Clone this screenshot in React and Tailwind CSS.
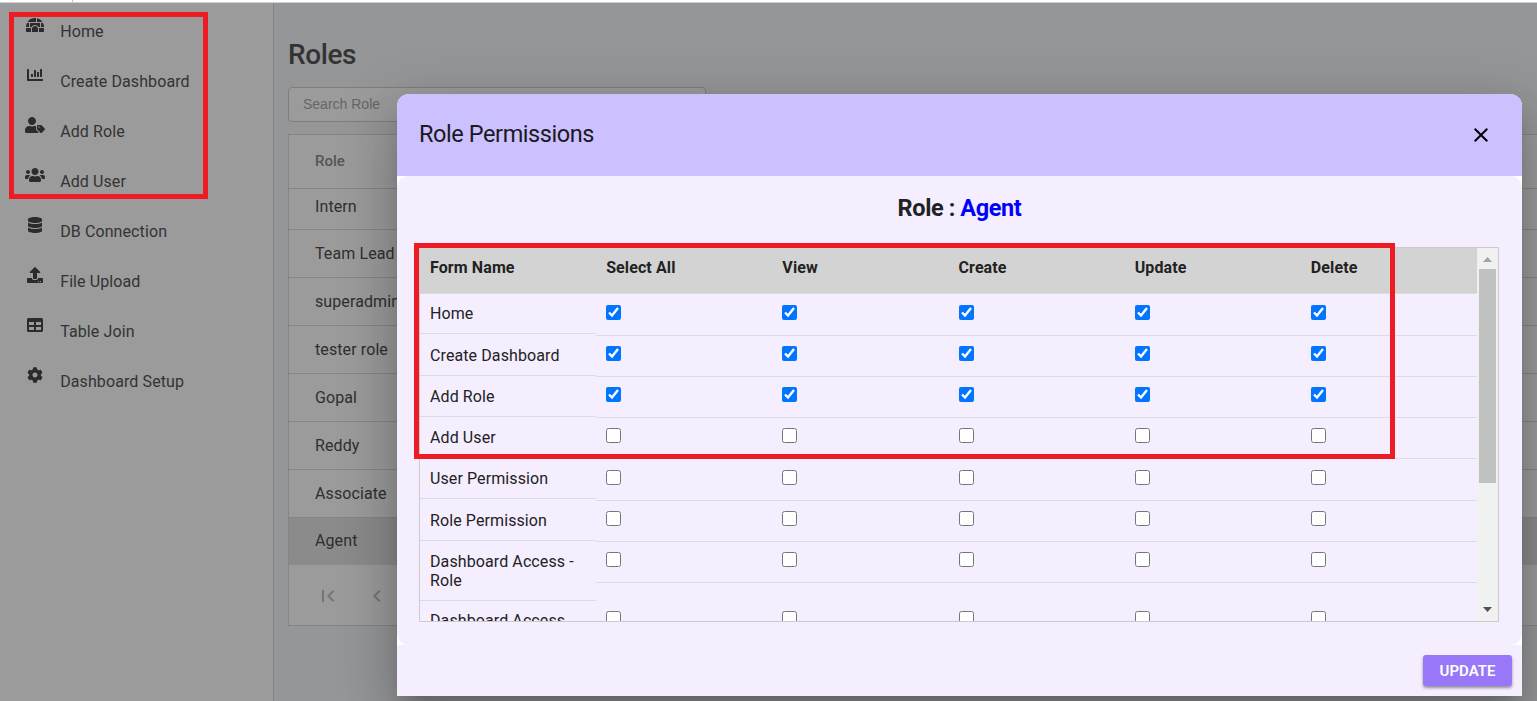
import React from "react";
import {
  FaIgloo,
  FaChartBar,
  FaUserTag,
  FaUsers,
  FaDatabase,
  FaUpload,
  FaTable,
  FaCog,
} from "react-icons/fa";
import { MdFirstPage, MdChevronLeft, MdClose } from "react-icons/md";

const menu = [
  { label: "Home", icon: FaIgloo, width: "w-[18px]" },
  { label: "Create Dashboard", icon: FaChartBar, width: "w-4" },
  { label: "Add Role", icon: FaUserTag, width: "w-5" },
  { label: "Add User", icon: FaUsers, width: "w-5" },
  { label: "DB Connection", icon: FaDatabase, width: "w-3.5" },
  { label: "File Upload", icon: FaUpload, width: "w-4" },
  { label: "Table Join", icon: FaTable, width: "w-4" },
  { label: "Dashboard Setup", icon: FaCog, width: "w-4" },
];

const roles = [
  { name: "Intern", height: "h-[41px] pb-1" },
  { name: "Team Lead", height: "h-12" },
  { name: "superadmin", height: "h-12" },
  { name: "tester role", height: "h-12" },
  { name: "Gopal", height: "h-12" },
  { name: "Reddy", height: "h-12" },
  { name: "Associate", height: "h-12" },
  { name: "Agent", height: "h-[47px]", selected: true },
];

const columns = ["Select All", "View", "Create", "Update", "Delete"];

const forms = [
  { name: "Home", checked: true, height: "h-[42px]", pad: "pt-[11px]" },
  { name: "Create Dashboard", checked: true, height: "h-[41px]" },
  { name: "Add Role", checked: true, height: "h-[41px]" },
  { name: "Add User", checked: false, height: "h-[41px]" },
  { name: "User Permission", checked: false, height: "h-[42px]", pad: "pt-[11px]" },
  { name: "Role Permission", checked: false, height: "h-[41px]" },
  { name: "Dashboard Access - Role", checked: false, height: "h-[59px]", tall: true },
  { name: "Dashboard Access", checked: false, height: "h-[59px]", tall: true },
];

function Sidebar() {
  return (
    <nav className="flex w-[274px] shrink-0 flex-col border-r border-[#818386] bg-[#9b9b9b]">
      {menu.map(({ label, icon: Icon, width }, i) => (
        <div key={label} className={`flex shrink-0 items-center ${i === 0 ? "h-[47px] pb-[3px]" : "h-[50px]"}`}>
          <span className="flex w-[60px] shrink-0 justify-center pl-2.5 text-[#2b2b2b]">
            <Icon className={`h-4 shrink-0 ${width}`} />
          </span>
          <span className="pt-[13px] pl-[0.2px] text-[16px] leading-5 tracking-[0.1px] text-[#333]">{label}</span>
        </div>
      ))}
    </nav>
  );
}

function RolesPage() {
  return (
    <main className="flex min-w-0 flex-1 flex-col bg-[#959698] pl-3.5">
      <h1 className="mt-9 text-[28px] leading-8 font-medium tracking-[-0.4px] text-[#333]">Roles</h1>
      <div className="mt-4 flex h-[35px] w-[418px] shrink-0 items-center rounded border border-[#7d7d7d] bg-[#9b9b9b] pl-3.5 font-['Liberation_Sans',sans-serif] text-[14px] text-[#666]">
        Search Role
      </div>
      <div className="mt-3 flex h-[492px] shrink-0 flex-col border border-r-0 border-[#858585] bg-[#9b9b9b]">
        <div className="flex h-[54px] shrink-0 items-center border-b border-[#858585] pl-[26px] text-[15px] font-medium text-[#555]">
          Role
        </div>
        {roles.map((r) => (
          <div
            key={r.name}
            className={`flex shrink-0 items-center border-b pl-[26px] text-[16px] tracking-[0.1px] text-[#2f2f2f] ${r.height} ${
              r.selected ? "border-[#8b8b8b] bg-[#8b8b8b]" : "border-[#858585]"
            }`}
          >
            {r.name}
          </div>
        ))}
        <div className="flex flex-1 items-center gap-[25px] pt-0.5 pl-[27px] text-[#757575]">
          <MdFirstPage size={24} />
          <MdChevronLeft size={24} />
        </div>
      </div>
    </main>
  );
}

function PermissionTable() {
  return (
    <div className="mr-[23px] ml-[22px] flex h-[375px] border border-[#ccc]">
      <div className="min-w-0 flex-1 overflow-hidden">
        <div className="grid h-[46px] grid-cols-6 border-b border-[#ddd] bg-[#d3d3d3] pt-2.5 text-[16px] leading-[19px] font-bold tracking-[0.1px] text-[#222]">
          <span className="pl-2.5">Form Name</span>
          {columns.map((c) => (
            <span key={c} className="pl-2.5">
              {c}
            </span>
          ))}
        </div>
        {forms.map((f, i) => (
          <div key={i} className={`grid grid-cols-6 ${f.height}`}>
            <div
              className={`border-b border-[#ddd] px-2.5 pt-2.5 text-[16px] leading-[19px] tracking-[0.1px] text-[#222] ${
                f.tall ? "h-[59px]" : "h-10"
              }`}
            >
              {f.name}
            </div>
            {columns.map((c) => (
              <div
                key={c}
                className={`border-b border-[#ddd] pl-2.5 ${f.pad || "pt-2.5"} ${f.tall ? "h-[41px]" : "h-full"}`}
              >
                <input type="checkbox" defaultChecked={f.checked} className="block size-[15px]" />
              </div>
            ))}
          </div>
        ))}
      </div>
      <div className="flex w-[21px] shrink-0 flex-col items-center bg-[#f1f1f1] pt-[9px] pb-[9px]">
        <svg width="9" height="5" viewBox="0 0 9 5">
          <path d="M4.5 0L9 5H0z" fill="#a3a3a3" />
        </svg>
        <div className="mt-[7px] h-[214px] w-[17px] bg-[#c1c1c1]" />
        <svg className="mt-auto" width="9" height="5" viewBox="0 0 9 5">
          <path d="M0 0H9L4.5 5z" fill="#505050" />
        </svg>
      </div>
    </div>
  );
}

function PermissionDialog() {
  return (
    <section className="absolute top-[94px] left-[397px] flex h-[602px] w-[1125px] flex-col overflow-hidden rounded-t-xl bg-white text-[#1f1f1f] shadow-[0_14px_19px_-9px_rgba(0,0,0,0.2),0_30px_48px_4px_rgba(0,0,0,0.14),0_11px_58px_10px_rgba(0,0,0,0.12)]">
      <header className="flex h-[82px] shrink-0 items-center justify-between bg-[#ccc0ff] pr-[29.5px] pl-[22px]">
        <h2 className="pb-0.5 text-[23.5px] leading-8 tracking-[-0.42px] text-[#1a1a22]">Role Permissions</h2>
        <MdClose size={24} className="text-black" />
      </header>
      <div className="h-[469px] shrink-0 rounded-xl bg-[#f5eeff]">
        <h3 className="pt-[17px] pb-[23px] text-center text-[23.5px] leading-[31px] font-bold tracking-[-0.4px] text-[#222]">
          Role : <span className="text-[#0000ff]">Agent</span>
        </h3>
        <PermissionTable />
      </div>
      <footer className="flex flex-1 justify-end bg-[#f5eeff] pt-2.5 pr-2.5">
        <button className="h-[31px] w-[89px] rounded-[3px] bg-[#9977f9] pt-0.5 text-[15px] font-semibold text-white shadow-[0_2px_3px_rgba(0,0,0,0.4)]">
          UPDATE
        </button>
      </footer>
    </section>
  );
}

export default function App() {
  return (
    <div className="relative flex h-[701px] w-[1537px] flex-col overflow-hidden font-[Roboto,sans-serif]">
      <div className="flex h-[3px] shrink-0 border-b border-[#d0d0d0] bg-white">
        <div className="w-[73px] border-r border-[#c4c4c4]" />
      </div>
      <div className="flex min-h-0 flex-1">
        <Sidebar />
        <RolesPage />
      </div>
      <PermissionDialog />
      <div className="pointer-events-none absolute top-3 left-[9px] h-[187px] w-[199px] border-5 border-[#ed1c24]" />
      <div className="pointer-events-none absolute top-[243px] left-[414px] h-[216px] w-[981px] border-5 border-[#ed1c24]" />
    </div>
  );
}
